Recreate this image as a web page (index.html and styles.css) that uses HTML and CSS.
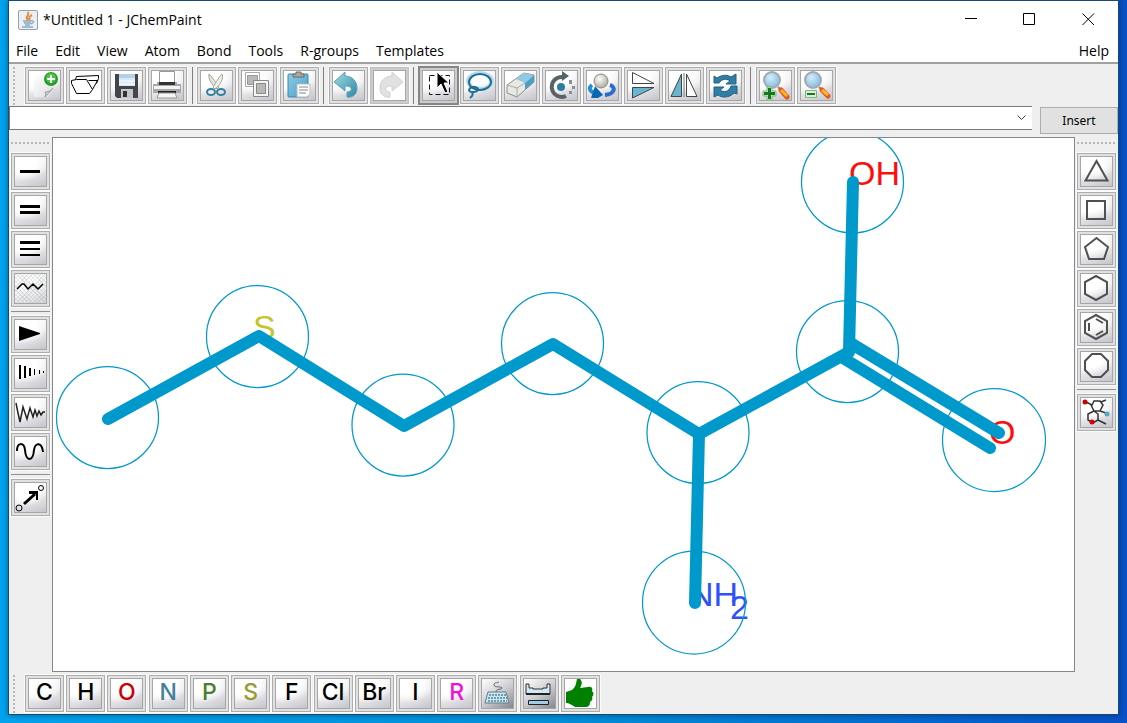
FILE: index.html
```html
<!DOCTYPE html>
<html lang="en">
<head>
<meta charset="utf-8">
<title>*Untitled 1 - JChemPaint</title>
<link rel="stylesheet" href="styles.css">
</head>
<body>
<svg class="defs" aria-hidden="true">
  <defs>
    <linearGradient id="teal" x1="0" y1="0" x2="1" y2="1"><stop offset="0" stop-color="#a4dbe4"/><stop offset="1" stop-color="#2f87a6"/></linearGradient>
    <linearGradient id="sky" x1="0" y1="0" x2="1" y2="1"><stop offset="0" stop-color="#8ccdea"/><stop offset="1" stop-color="#4a9cc4"/></linearGradient>
    <linearGradient id="paper" x1="0" y1="0" x2="1" y2="1"><stop offset="0" stop-color="#ffffff"/><stop offset="1" stop-color="#dcdce0"/></linearGradient>
    <linearGradient id="metal" x1="0" y1="0" x2="0" y2="1"><stop offset="0" stop-color="#f4f4f4"/><stop offset="1" stop-color="#8f9396"/></linearGradient>
    <radialGradient id="lens" cx=".4" cy=".35" r=".7"><stop offset="0" stop-color="#d3edfb"/><stop offset="1" stop-color="#7fb9de"/></radialGradient>
    <radialGradient id="ball" cx=".4" cy=".35" r=".7"><stop offset="0" stop-color="#ffffff"/><stop offset="1" stop-color="#aaa69c"/></radialGradient>
  </defs>
</svg>
<div class="window">
  <header class="titlebar">
    <svg class="app-icon" viewBox="0 0 20 20" aria-hidden="true">
      <rect x="0" y="0" width="20" height="20" rx="2" fill="#8fa3b5"/><rect x="1" y="1" width="18" height="18" rx="1" fill="#eceff1"/>
      <path d="M10 10C6 7 12 6 10 2M12 10C10 8 12 6 14 5" fill="none" stroke="#e58a3c" stroke-width="2"/>
      <path d="M5 11h8M6 13h7M7 15h5M4 17h11M13 11c4-1 3 2 0 3" fill="none" stroke="#5b86aa" stroke-width="1"/>
    </svg>
    <h1 class="title">*Untitled 1 - JChemPaint</h1>
    <button class="win-btn" aria-label="Minimize"><svg viewBox="0 0 13 13"><path d="M1 5.500h12" stroke="#000" /></svg></button>
    <button class="win-btn" aria-label="Maximize"><svg viewBox="0 0 13 13"><path d="M.5 .5h11v11H.5z" fill="none" stroke="#000"/></svg></button>
    <button class="win-btn" aria-label="Close"><svg viewBox="0 0 13 13"><path d="M.5 .5l11.500 11.500M12 .5L.5 12" stroke="#000"/></svg></button>
  </header>

  <nav class="menubar" aria-label="Main menu">
    <button>File</button><button>Edit</button><button>View</button><button>Atom</button><button>Bond</button><button>Tools</button><button>R-groups</button><button>Templates</button><button class="help">Help</button>
  </nav>

  <div class="toolbar" role="toolbar" aria-label="Editing">
    <span class="grip"></span>
    <div class="tools">
      <button class="tool" aria-label="New"><svg viewBox="0 0 31 29"><path d="M5 4h20v14l-6 8H5z" fill="url(#paper)"/><path d="M24 17l-8 9c1-2 1-4 0-5 3 0 6-1 8-4z" fill="#d6d6d8" stroke="#999"/><circle cx="22" cy="8" r="7" fill="#23a02b"/><circle cx="22" cy="7" r="5" fill="#4cc43e"/><path d="M22 4v8M18 8h8" stroke="#fff" stroke-width="2"/></svg></button>
      <button class="tool flat" aria-label="Open"><svg viewBox="0 0 31 29"><path d="M1.500 9.500L6.500 8.500H16.500L22.500 18.500L27.500 9.500H18.500M1.500 9.500V12.500L6.500 22.500H19.500L22.500 18.500M5.500 8.500L6.500 5.500L28.500 4.500V7.500L26.500 12.500" fill="none" stroke="#000" stroke-width="1"/></svg></button>
      <button class="tool" aria-label="Save"><svg viewBox="0 0 31 29"><path d="M4 3h23v24H6l-2-2z" fill="#434547"/><path d="M8 3h16v12H8z" fill="#d8e8f4"/><path d="M8 3h16v4H8z" fill="#b3d1ea"/><path d="M8 10h16M8 13h16" stroke="#fff"/><path d="M10 18h12v9H10z" fill="#c4c7c9"/><path d="M12 20h4v6h-4z" fill="#333"/></svg></button>
      <button class="tool" aria-label="Print"><svg viewBox="0 0 31 29"><path d="M7.500 .5h15v12h-15z" fill="#fff" stroke="#999"/><path d="M1 13h4v-2h20v2h4v9H1z" fill="#a5a8aa"/><path d="M7 11h16v3H7z" fill="#333"/><path d="M2 15h26v3H2z" fill="#f3f3f3"/><path d="M6 20h18v2H6z" fill="#222"/><path d="M7 22h16l2 5H5z" fill="#f6f6f6" stroke="#999"/></svg></button>
      <span class="sep"></span>
      <button class="tool" aria-label="Cut"><svg viewBox="0 0 31 29"><path d="M8 3c-1 5 3 11 8 15l2-2C15 12 12 7 8 3z" fill="#e6e6dc" stroke="#a4a498"/><path d="M21 3c2 5-2 11-7 15l-2-2c3-4 5-9 9-13z" fill="#f0f0e8" stroke="#a4a498"/><ellipse cx="10" cy="21" rx="4" ry="3" fill="none" stroke="#32809f" stroke-width="2"/><ellipse cx="20" cy="21" rx="4" ry="3" fill="none" stroke="#32809f" stroke-width="2"/></svg></button>
      <button class="tool" aria-label="Copy"><svg viewBox="0 0 31 29"><path d="M3.500 1.500h14v14h-14z" fill="#fff" stroke="#aaa"/><path d="M5.500 4.500h10v9h-10z" fill="#b9b9b5" stroke="#999"/><path d="M11.500 9.500h15v16h-15z" fill="#f4f4f4" stroke="#888"/><path d="M14.500 12.500h9v10h-9z" fill="#b9b9b5" stroke="#888"/></svg></button>
      <button class="tool" aria-label="Paste"><svg viewBox="0 0 31 29"><rect x="4" y="3" width="20" height="23" rx="1" fill="url(#sky)" stroke="#3a85ab"/><path d="M9 6V3h3V1h5v2h3v3z" fill="#aaa89f" stroke="#6f6d66"/><path d="M13 13h13v10l-3 3H13z" fill="#fff" stroke="#bbb"/><path d="M15 16h9M15 19h9M15 22h7" stroke="#888"/></svg></button>
      <span class="sep"></span>
      <button class="tool" aria-label="Undo"><svg viewBox="0 0 31 29"><path d="M1 11L12 1v4c7 0 12 5 12 12s-5 10-10 9v-5c5 0 5-4 3-5-1-1-3-1-5-1v5z" fill="url(#teal)" stroke="#5aa2b5"/></svg></button>
      <button class="tool disabled" aria-label="Redo" disabled><svg viewBox="0 0 31 29"><path d="M29 11L18 1v4C11 5 6 10 6 17s5 10 10 9v-5c-5 0-5-4-3-5 1-1 3-1 5-1v5z" fill="#e1e1e1" stroke="#cfcfcf"/></svg></button>
      <span class="sep"></span>
      <button class="tool selected" aria-label="Select" aria-pressed="true"><svg viewBox="0 0 31 29"><path d="M6.500 4.500h20v19h-20z" fill="none" stroke="#111" stroke-dasharray="5 3"/><path d="M14 1v16l4-4 4 9 3-1-4-9h5z" fill="#000" stroke="#fff"/></svg></button>
      <button class="tool" aria-label="Lasso"><svg viewBox="0 0 31 29"><ellipse cx="16" cy="10" rx="12" ry="8" fill="none" stroke="#b5dcec" stroke-width="4"/><ellipse cx="16" cy="11" rx="11" ry="8" fill="none" stroke="#216f96" stroke-width="2"/><path d="M5 20c0-5 8-5 9-2s-6 4-9 2c3 1 6 3 1 7" fill="none" stroke="#216f96" stroke-width="2"/></svg></button>
      <button class="tool" aria-label="Erase"><svg viewBox="0 0 31 29"><path d="M2 14L19 2l10 2v7L12 26 2 22z" fill="#e9e9e4" stroke="#8b8b86"/><path d="M11 8l8-6 10 2-9 8z" fill="#8fcae4"/><path d="M20 12l9-8v7l-9 8z" fill="#4f9fc4"/><path d="M2 14l10 3v9M12 17l8-5" fill="none" stroke="#aaa"/></svg></button>
      <button class="tool" aria-label="Rotate"><svg viewBox="0 0 31 29"><path d="M17 6A10 10 0 1 0 20 25" fill="none" stroke="#596266" stroke-width="4"/><path d="M16 0l7 5-7 5z" fill="#596266"/><circle cx="15" cy="16" r="4" fill="#2b7ba3"/><path d="M23 9h3v4h-3zM26 15h3v3h-3zM23 20h3v3h-3z" fill="#8a9296"/></svg></button>
      <button class="tool" aria-label="Rotate in space"><svg viewBox="0 0 31 29"><path d="M5 14c-4 3-2 7 3 8" fill="none" stroke="#1f8fd8" stroke-width="4"/><path d="M4 27L8 15l8 9-5 3z" fill="#0868b4"/><path d="M23 14c6 2 5 9-5 10" fill="none" stroke="#2b6cd0" stroke-width="4"/><circle cx="14" cy="10" r="7" fill="url(#ball)" stroke="#8f8b80"/></svg></button>
      <button class="tool" aria-label="Flip vertically"><svg viewBox="0 0 31 29"><path d="M4.500 1.500L26 12.500H4.500z" fill="#fff" stroke="#444"/><path d="M4.500 16.500H26L4.500 27z" fill="#69b4d1" stroke="#444"/></svg></button>
      <button class="tool" aria-label="Flip horizontally"><svg viewBox="0 0 31 29"><path d="M2 25.500L12.500 3v22.500z" fill="#69b4d1" stroke="#444"/><path d="M15 2v24" stroke="#777"/><path d="M17.500 3L28 25.500H17.500z" fill="#fff" stroke="#444"/></svg></button>
      <button class="tool" aria-label="Clean structure"><svg viewBox="0 0 31 29"><path d="M4 12V5l3 2c6-4 11-3 14-1l5-3v10H16l4-3c-4-3-8-2-11 2z" fill="#2f7fa5" stroke="#24607f"/><path d="M27 15v8l-3-1c-5 5-12 5-16 2l-4 2V16h10l-4 3c4 3 9 2 11-4z" fill="#2f7fa5" stroke="#24607f"/></svg></button>
      <span class="sep"></span>
      <button class="tool" aria-label="Zoom in"><svg viewBox="0 0 31 29"><path d="M18 16l3 3" stroke="#888" stroke-width="2"/><path d="M21 19l6 7" stroke="#e2581c" stroke-width="5" stroke-linecap="round"/><path d="M21 19l6 6" stroke="#ffb52b" stroke-width="3"/><circle cx="12" cy="9" r="8" fill="url(#lens)" stroke="#a3a9ae" stroke-width="2"/><path d="M7 16h5v4h4v5h-4v4H7v-4H3v-5h4z" fill="#d0ebd0" stroke="#7fb57f"/><path d="M9.500 17v11M4 22.500h11" stroke="#13791c" stroke-width="3"/></svg></button>
      <button class="tool" aria-label="Zoom out"><svg viewBox="0 0 31 29"><path d="M18 16l3 3" stroke="#888" stroke-width="2"/><path d="M21 19l6 6" stroke="#e2581c" stroke-width="5" stroke-linecap="round"/><path d="M21 19l6 5" stroke="#ffb52b" stroke-width="3"/><circle cx="12" cy="9" r="8" fill="url(#lens)" stroke="#a3a9ae" stroke-width="2"/><path d="M4.500 19.500h11v7h-11z" fill="#d9f0d9" stroke="#7fb57f"/><path d="M6 23h8" stroke="#13791c" stroke-width="2"/></svg></button>
    </div>
  </div>

  <form class="insert-row">
    <div class="combo">
      <input type="text" aria-label="Structure to insert">
      <button type="button" class="drop" aria-label="Show history"><svg viewBox="0 0 9 6"><path d="M.5 .5l4 4 4-4" fill="none" stroke="#444"/></svg></button>
    </div>
    <button type="button" class="insert">Insert</button>
  </form>

  <main class="workspace">
    <div class="side" role="toolbar" aria-label="Bonds">
      <span class="grip flat-grip"></span>
      <button class="tool" aria-label="Single bond"><svg viewBox="0 0 31 29"><path d="M5 13h20v3H5z"/></svg></button>
      <button class="tool" aria-label="Double bond"><svg viewBox="0 0 31 29"><path d="M5 9h20v3H5zM5 15h20v3H5z"/></svg></button>
      <button class="tool" aria-label="Triple bond"><svg viewBox="0 0 31 29"><path d="M5 6h20v3H5zM5 13h20v2H5zM5 19h20v2H5z"/></svg></button>
      <button class="tool dither" aria-label="Any bond"><svg viewBox="0 0 31 29"><path d="M2 15l5-5h2l4 5 5-5 5 5 5-5" fill="none" stroke="#000" stroke-width="1.500"/></svg></button>
      <span class="sep"></span>
      <button class="tool" aria-label="Wedge bond"><svg viewBox="0 0 31 29"><path d="M4 6l21 7v1L4 21z"/></svg></button>
      <button class="tool" aria-label="Hashed bond"><svg viewBox="0 0 31 29"><path d="M4 6h2v14H4zM9 7h2v12H9zM14 9h2v8h-2zM19 10h1v6h-1zM24 11h1v4h-1zM28 12h1v2h-1z"/></svg></button>
      <button class="tool" aria-label="Wavy bond"><svg viewBox="0 0 31 29"><path d="M1 5l2 10 2 9 3-15 4 12 3-11 3 9 2-7 2 6 2-5 2 4 2-3h2" fill="none" stroke="#222" stroke-width="1.500"/></svg></button>
      <button class="tool" aria-label="Undefined bond"><svg viewBox="0 0 31 29"><path d="M2 14c0-9 7-9 8-1 1 12 8 12 9 0 1-8 8-8 9 2" fill="none" stroke="#000" stroke-width="2"/></svg></button>
      <span class="sep"></span>
      <button class="tool" aria-label="Draw chain"><svg viewBox="0 0 31 29"><circle cx="4" cy="25" r="3" fill="none" stroke="#000"/><circle cx="26" cy="5" r="2.500" fill="none" stroke="#000"/><path d="M9 21L20 11" stroke="#000" stroke-width="3"/><path d="M14 8h9v9h-2v-6h-7z"/></svg></button>
    </div>

    <section class="canvas" aria-label="Structure">
      <svg viewBox="53 138 1021 532" preserveAspectRatio="xMinYMin meet">
        <g class="atoms">
          <text x="849" y="185" fill="#ff0d0d">OH</text>
          <text x="989" y="444" fill="#ff0d0d">O</text>
          <text x="253" y="339" fill="#c6c62c">S</text>
          <text x="689" y="606" fill="#3050f8">NH<tspan x="730" y="619">2</tspan></text>
        </g>
        <g fill="none" stroke="#0099cc" stroke-width="12" stroke-linecap="round" stroke-linejoin="round">
          <path d="M108 419L259 336L404 426L553 344L699 434L849 352L853 182"/>
          <path d="M699 434L695 603M852 344L999 433M843 358L990 448"/>
        </g>
        <g fill="none" stroke="#0099cc" stroke-width="1.250">
          <circle cx="107.500" cy="417.500" r="51"/><circle cx="257.500" cy="336.500" r="51"/><circle cx="403" cy="425" r="51"/><circle cx="552.500" cy="343.500" r="51"/><circle cx="698" cy="432.500" r="51"/><circle cx="847.500" cy="351.500" r="51"/><circle cx="852.500" cy="182" r="51"/><circle cx="994" cy="440" r="51.500"/><circle cx="694" cy="602.500" r="51.500"/>
        </g>
      </svg>
    </section>

    <div class="side" role="toolbar" aria-label="Rings">
      <span class="grip flat-grip"></span>
      <button class="tool ring" aria-label="Triangle"><svg viewBox="0 0 31 29"><path d="M15.500 4l11 19.500H4.500z"/></svg></button>
      <button class="tool ring" aria-label="Square"><svg viewBox="0 0 31 29"><path d="M6 5h18v18H6z"/></svg></button>
      <button class="tool ring" aria-label="Pentagon"><svg viewBox="0 0 31 29"><path d="M15.500 3L27 12l-4 12H8L4 12z"/></svg></button>
      <button class="tool ring" aria-label="Hexagon"><svg viewBox="0 0 31 29"><path d="M15 2l11 6v12l-11 6-11-6V8z"/></svg></button>
      <button class="tool ring" aria-label="Benzene"><svg viewBox="0 0 31 29"><path d="M15 2l11 6v12l-11 6-11-6V8zM8 10v8M15 6l7 4M15 22l7-4"/></svg></button>
      <button class="tool ring" aria-label="Octagon"><svg viewBox="0 0 31 29"><path d="M11 2h9l7 7v9l-7 7h-9l-7-7V9z"/></svg></button>
      <span class="sep"></span>
      <button class="tool" aria-label="Structure templates"><svg viewBox="0 0 31 29"><path d="M5 4l6 3 2-4h6l3 4-3 6h-6l-3-6M20 4l5-2M19 13l6 2M13 13l-6 3v6l5 3 5-3v-6l-4-3M17 22l8 4" fill="none" stroke="#333" stroke-width="1.500"/><circle cx="4" cy="4" r="2.500" fill="#cf0000"/><circle cx="11" cy="24" r="2.500" fill="#cf0000"/><circle cx="26" cy="16" r="2.500" fill="#58a5c2"/></svg></button>
    </div>
  </main>

  <footer class="toolbar" role="toolbar" aria-label="Elements">
    <span class="grip"></span>
    <div class="elements">
      <button class="tool"><span>C</span></button>
      <button class="tool"><span>H</span></button>
      <button class="tool oxygen"><span>O</span></button>
      <button class="tool nitrogen"><span>N</span></button>
      <button class="tool phosphorus"><span>P</span></button>
      <button class="tool sulfur"><span>S</span></button>
      <button class="tool"><span>F</span></button>
      <button class="tool"><span>Cl</span></button>
      <button class="tool"><span>Br</span></button>
      <button class="tool"><span>I</span></button>
      <button class="tool rgroup"><span>R</span></button>
      <button class="tool dark" aria-label="Enter element"><svg viewBox="0 0 31 29"><path d="M14 13c0-4 6-2 6-4s-8 0-8-3 3-2 5-3" fill="none" stroke="#666"/><path d="M6 13h18l3 11H3z" fill="#cfe6ef" stroke="#5b7f8f"/><path d="M7 16h17M6 19h19M6 22h19" stroke="#4d88a0" stroke-width="1.500" stroke-dasharray="2 1"/></svg></button>
      <button class="tool dark" aria-label="Periodic table"><svg viewBox="0 0 31 29"><path d="M2 5h3v4h4v1h10V9h4V5h3v10H2z" fill="#cfe9f5" stroke="#333"/><path d="M2 15h24" stroke="#222" stroke-width="2"/><path d="M4.500 21.500h20v4h-20z" fill="#9bd0e6" stroke="#222"/></svg></button>
      <button class="tool flat" aria-label="Enhanced values"><svg viewBox="0 0 31 29"><path d="M1 13l6-2c4-3 4-7 5-11l2-1c4 3 3 7 1 10l8-1c4-1 5 2 4 4 2 2 2 4 0 6 1 2 0 4-2 5 0 3-1 5-5 5H10c-3-2-6-4-9-4z" fill="#008000"/></svg></button>
    </div>
  </footer>
</div>
</body>
</html>
```
FILE: styles.css
```css
* { box-sizing: border-box; }

body {
  margin: 0;
  min-height: 100vh;
  display: flex;
  padding: 0 8px 8px;
  font-family: "Open Sans", "Noto Sans", sans-serif;
  font-size: 14px;
  color: #000;
  background: linear-gradient(90deg, #00a4ee 0%, #0090d8 50%, #0752c8 100%);
}

.defs { position: absolute; width: 0; height: 0; }

button { font: inherit; color: inherit; margin: 0; padding: 0; }

.window {
  flex: 1;
  min-width: 0;
  display: flex;
  flex-direction: column;
  background: #efefef;
  border: 1px solid #1b4a70;
  box-shadow: 0 0 6px rgba(0, 20, 60, 0.5);
}

.titlebar {
  display: flex;
  align-items: center;
  height: 37px;
  background: #fff;
}
.app-icon { width: 20px; height: 20px; margin: 0 5px 0 9px; }
.title { flex: 1; margin: 0; font-size: 14px; font-weight: 400; }
.win-btn {
  width: 59px;
  height: 37px;
  display: grid;
  place-items: center;
  border: 0;
  background: none;
}
.win-btn svg { width: 13px; height: 13px; }

.menubar {
  display: flex;
  align-items: center;
  gap: 17px;
  height: 26px;
  padding: 2px 9px 0 7px;
  background: #fff;
  border-bottom: 2px solid #a0a0a0;
}
.menubar button { border: 0; background: none; line-height: 20px; }
.menubar .help { margin-left: auto; }

.toolbar {
  display: flex;
  gap: 10px;
  height: 42px;
  padding: 3px 0 0 4px;
}
.grip {
  width: 2px;
  height: 38px;
  background: repeating-linear-gradient(180deg, #b8b8b8 0 2px, transparent 2px 4px);
}
.flat-grip {
  align-self: stretch;
  width: auto;
  height: 2px;
  margin: 0 0 7px;
  background: repeating-linear-gradient(90deg, #b8b8b8 0 2px, transparent 2px 4px);
}

.tools {
  display: flex;
  justify-content: space-between;
  width: 811px;
  height: 37px;
}
.elements {
  display: grid;
  grid-template-columns: repeat(14, 1fr);
  width: 577px;
  height: 37px;
}

.tool {
  flex: none;
  width: 39px;
  height: 37px;
  padding: 2px;
  border: 1px solid #adadad;
  border-radius: 0;
  background: #e1e1e1;
  box-shadow: 0 0 0 1px #fbfbfb;
}
.tool > svg, .tool > span {
  display: block;
  width: 33px;
  height: 31px;
  border: 1px solid #a6a6a6;
  background:
    radial-gradient(ellipse 26px 18px at 8px 6px, #fff 50%, rgba(255, 255, 255, 0) 100%),
    linear-gradient(160deg, #fff 0%, #ececee 50%, #c4c4cc 100%);
}
.tool > span {
  font-family: Inter, "Liberation Sans", sans-serif;
  font-size: 23px;
  font-weight: 500;
  line-height: 27px;
  text-align: center;
}
.tool.flat > svg { background: #fff; }
.tool.dark > svg { background: linear-gradient(145deg, #fff 0%, #cfcfd3 50%, #85858f 100%); }
.tool.dither > svg {
  background:
    repeating-linear-gradient(45deg, rgba(190, 160, 200, 0.3) 0 1px, transparent 1px 3px),
    repeating-linear-gradient(135deg, rgba(150, 200, 160, 0.3) 0 1px, transparent 1px 3px),
    linear-gradient(160deg, #fff 40%, #d8d8dc 100%);
}
.tool.disabled { background: #cccccc; border-color: #bfbfbf; }
.tool.disabled > svg { background: #fff; }
.tool.selected {
  background: #cccccc;
  border-color: #868686;
  box-shadow: 0 0 0 1px #868686;
}
.tool.ring path { fill: none; stroke: #505050; stroke-width: 2; }

.oxygen { color: #c80000; }
.nitrogen { color: #44809a; }
.phosphorus { color: #48802a; }
.sulfur { color: #969a30; }
.rgroup { color: #f20fdc; }

.tools .sep {
  width: 6px;
  background: linear-gradient(#808080, #808080) center / 1px 100% no-repeat;
}
.side .sep {
  width: 39px;
  height: 5px;
  background: linear-gradient(#909090, #909090) center / 100% 1px no-repeat;
}

.insert-row {
  display: flex;
  align-items: flex-start;
  gap: 8px;
  height: 31px;
  margin: 0;
}
.combo {
  flex: 1;
  display: flex;
  height: 24px;
  background: #fff;
  border: 1px solid #7a7a7a;
  border-right: 0;
}
.combo input {
  flex: 1;
  min-width: 0;
  border: 0;
  padding: 0 4px;
  background: none;
  font: inherit;
}
.drop {
  width: 22px;
  display: grid;
  place-items: center;
  border: 0;
  background: none;
}
.drop svg { width: 9px; height: 6px; }
.insert {
  width: 78px;
  height: 27px;
  margin-top: 1px;
  border: 1px solid #adadad;
  background: #e1e1e1;
  font-family: "Noto Sans", sans-serif;
  font-size: 12px;
}

.workspace { flex: 1; display: flex; min-height: 0; }
.side {
  width: 43px;
  flex: none;
  display: flex;
  flex-direction: column;
  align-items: flex-start;
  gap: 2px;
  padding: 5px 2px 0;
}
.canvas {
  flex: 1;
  min-width: 0;
  overflow: hidden;
  background: #fff;
  border: 1px solid #828790;
}
.canvas svg { display: block; width: 100%; height: 100%; }
.atoms {
  font-family: "Liberation Sans", Arial, sans-serif;
  font-size: 34px;
}
```
